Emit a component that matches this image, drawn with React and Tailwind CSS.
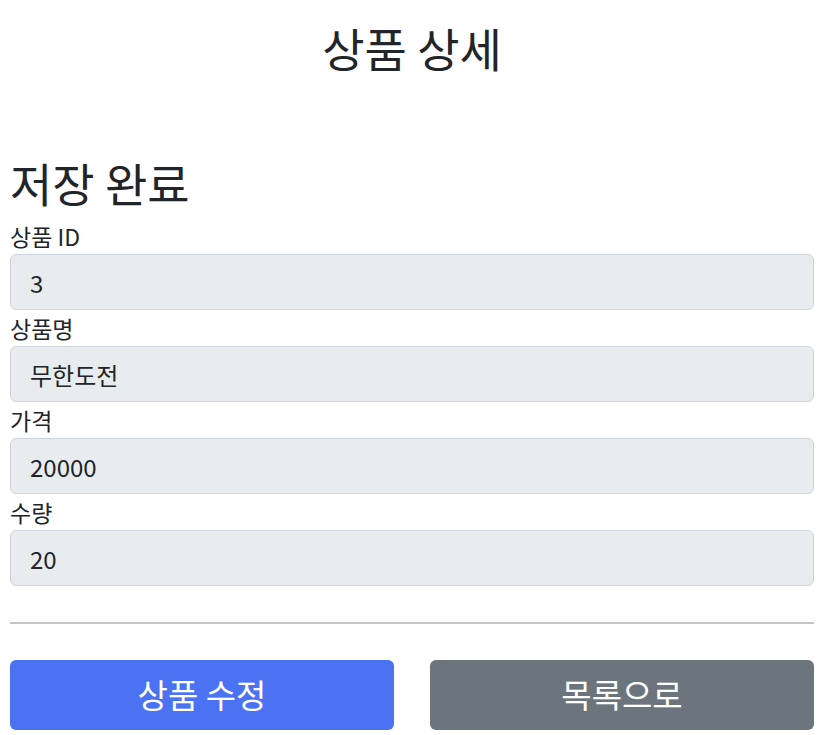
const fields = [
  { label: "상품 ID", value: "3" },
  { label: "상품명", value: "무한도전" },
  { label: "가격", value: "20000" },
  { label: "수량", value: "20" },
];

const App = () => {
  return (
    <div
      className="min-h-screen bg-white pl-[10px] pr-[12px] text-[#212529]"
      style={{ fontFamily: '"Noto Sans CJK KR", sans-serif' }}
    >
      {/* HEADER */}

      <div className="pt-[23px] text-center">
        <h2 className="text-[46px] leading-[48px]">상품 상세</h2>
      </div>

      <h2 className="mt-[87px] mb-[12px] text-[46px] leading-[48px]">저장 완료</h2>

      {/* FORM */}

      <div>
        {fields.map((f) => (
          <div key={f.label}>
            <label className="block text-[23px] leading-[36px]">{f.label}</label>
            <input
              readOnly
              value={f.value}
              className="block w-full h-[56px] px-[19px] rounded-[6px] border border-[#ced4da] bg-[#e9ecef] text-[24px] text-[#212529] outline-none"
            />
          </div>
        ))}
      </div>

      <hr className="mt-[36px] mb-[36px] border-t-2 border-[#c6c6c6]" />

      {/* BUTTONS */}

      <div className="grid grid-cols-2 gap-[36px]">
        <button className="h-[70px] rounded-[6px] bg-[#4a72f3] text-white text-[33px]">
          상품 수정
        </button>
        <button className="h-[70px] rounded-[6px] bg-[#6c757d] text-white text-[33px]">
          목록으로
        </button>
      </div>
    </div>
  );
};

export default App;
